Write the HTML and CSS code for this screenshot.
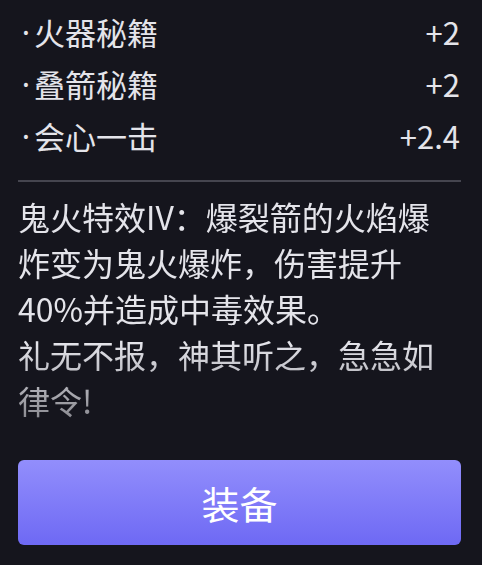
FILE: index.html
```html
<!DOCTYPE html>
<html lang="zh-CN">
<head>
<meta charset="utf-8">
<link rel="stylesheet" href="styles.css">
</head>
<body>
<div class="panel">
  <ul class="stats">
    <li class="stat"><span class="stat-name"><span class="bullet">·</span>火器秘籍</span><span class="stat-value">+2</span></li>
    <li class="stat"><span class="stat-name"><span class="bullet">·</span>叠箭秘籍</span><span class="stat-value">+2</span></li>
    <li class="stat"><span class="stat-name"><span class="bullet">·</span>会心一击</span><span class="stat-value">+2.4</span></li>
  </ul>
  <div class="divider"></div>
  <p class="desc">鬼火特效IV：爆裂箭的火焰爆炸变为鬼火爆炸，伤害提升40%并造成中毒效果。<br>礼无不报，神其听之，急急如律令!</p>
  <button class="equip">装备</button>
</div>
</body>
</html>
```
FILE: styles.css
```css
html, body {
  margin: 0;
  padding: 0;
  background: #15151d;
}
body {
  font-family: "Noto Sans CJK SC", "Noto Sans", sans-serif;
  color: #e4e4ea;
}
.panel {
  padding: 6px 21px 20px 18px;
  display: flex;
  flex-direction: column;
}
.stats {
  list-style: none;
  margin: 0;
  padding: 0;
}
.stat {
  display: flex;
  justify-content: space-between;
  align-items: center;
  height: 52px;
  font-size: 31px;
  line-height: 52px;
}
.stat-name {
  display: flex;
  align-items: center;
}
.bullet {
  display: inline-block;
  width: 16px;
  text-align: center;
  font-family: "Noto Sans", sans-serif;
}
.stat-value {
  padding-right: 1px;
}
.divider {
  height: 2px;
  background: #45454f;
  margin-top: 18px;
}
.desc {
  margin: 11px 0 0 0;
  font-size: 32px;
  line-height: 46px;
  height: 230px;
  -webkit-mask-image: linear-gradient(to bottom, #000 0, #000 150px, rgba(0,0,0,0.55) 230px);
  mask-image: linear-gradient(to bottom, #000 0, #000 150px, rgba(0,0,0,0.55) 230px);
}
.equip {
  margin-top: 37px;
  height: 85px;
  border: none;
  border-radius: 6px;
  background: linear-gradient(to bottom, #928efc, #6e69f4);
  color: #ffffff;
  font-family: "Noto Sans CJK SC", sans-serif;
  font-size: 38px;
  padding: 0;
}
```
